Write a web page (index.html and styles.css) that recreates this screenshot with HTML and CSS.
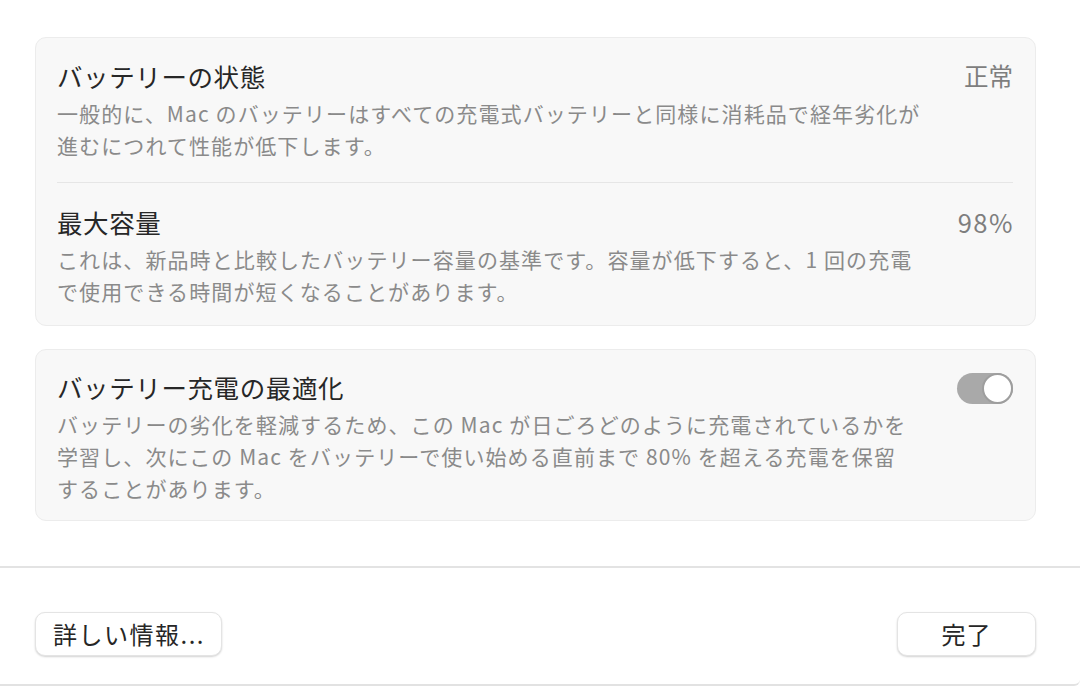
FILE: index.html
```html
<!DOCTYPE html>
<html lang="ja">
<head>
<meta charset="utf-8">
<link rel="stylesheet" href="styles.css">
</head>
<body>
<div class="window">
  <div class="content">
    <section class="card">
      <div class="row">
        <div class="text">
          <div class="title">バッテリーの状態</div>
          <div class="desc">一般的に、Mac のバッテリーはすべての充電式バッテリーと同様に消耗品で経年劣化が<br>進むにつれて性能が低下します。</div>
        </div>
        <div class="value">正常</div>
      </div>
      <div class="divider"></div>
      <div class="row row2">
        <div class="text">
          <div class="title">最大容量</div>
          <div class="desc">これは、新品時と比較したバッテリー容量の基準です。容量が低下すると、1 回の充電<br>で使用できる時間が短くなることがあります。</div>
        </div>
        <div class="value value-num">98%</div>
      </div>
    </section>
    <section class="card card2">
      <div class="row">
        <div class="text">
          <div class="title">バッテリー充電の最適化</div>
          <div class="desc">バッテリーの劣化を軽減するため、この Mac が日ごろどのように充電されているかを<br>学習し、次にこの Mac をバッテリーで使い始める直前まで 80% を超える充電を保留<br>することがあります。</div>
        </div>
        <div class="toggle"><div class="knob"></div></div>
      </div>
    </section>
  </div>
  <div class="separator"></div>
  <footer class="footer">
    <button class="btn btn-info">詳しい情報...</button>
    <button class="btn btn-done">完了</button>
  </footer>
</div>
</body>
</html>
```

FILE: styles.css
```css
html, body {
  margin: 0;
  padding: 0;
  background: #ffffff;
}
body {
  font-family: "Noto Sans CJK JP", "Noto Sans", sans-serif;
  color: #262626;
}
.window {
  width: 1080px;
  height: 686px;
  box-sizing: border-box;
  border-bottom: 2px solid #e2e2e2;
  border-bottom-right-radius: 6px;
  overflow: hidden;
  display: flex;
  flex-direction: column;
}
.content {
  padding: 37px 44px 0 35px;
  display: flex;
  flex-direction: column;
  gap: 23px;
}
.card {
  background: #f8f8f8;
  border: 1px solid #ececec;
  border-radius: 11px;
  padding: 23px 22px 18px 21px;
}
.card2 {
  padding-top: 22px;
  padding-bottom: 16px;
}
.row {
  display: flex;
  justify-content: space-between;
  align-items: flex-start;
}
.row2 {
  padding-top: 24px;
}
.text {
  display: flex;
  flex-direction: column;
}
.title {
  font-size: 25.5px;
  line-height: 30px;
  margin-bottom: 6px;
  color: #272727;
  letter-spacing: 0.6px;
}
.desc {
  font-size: 21px;
  line-height: 32px;
  color: #8a8a8a;
  letter-spacing: 1.1px;
}
.value {
  font-size: 24.5px;
  line-height: 30px;
  color: #7e7e7e;
  white-space: nowrap;
}
.value-num {
  font-size: 25.5px;
  letter-spacing: 1.5px;
  margin-right: -1px;
}
.divider {
  height: 1px;
  background: #e6e6e6;
  margin-top: 21px;
}
.toggle {
  width: 56px;
  height: 31px;
  border-radius: 16px;
  background: #a9a9a9;
  box-sizing: border-box;
  display: flex;
  justify-content: flex-end;
  margin-top: 1px;
  flex-shrink: 0;
}
.knob {
  width: 31px;
  height: 31px;
  border-radius: 50%;
  background: #ffffff;
  box-sizing: border-box;
  border: 2px solid #9e9e9e;
}
.separator {
  height: 2px;
  background: #e3e3e3;
  margin-top: 45px;
}
.footer {
  display: flex;
  justify-content: space-between;
  padding: 44px 44px 0 35px;
}
.btn {
  height: 44px;
  background: #ffffff;
  border: 1px solid #e4e4e4;
  border-radius: 10px;
  box-shadow: 0 1px 2px rgba(0, 0, 0, 0.18);
  font-family: "Noto Sans CJK JP", "Noto Sans", sans-serif;
  font-size: 24px;
  color: #262626;
  padding: 0;
  line-height: 42px;
}
.btn-info {
  width: 187px;
  text-align: left;
  padding-left: 17px;
  letter-spacing: 1.5px;
}
.btn-done {
  width: 139px;
  text-align: center;
  letter-spacing: 1px;
}
```
